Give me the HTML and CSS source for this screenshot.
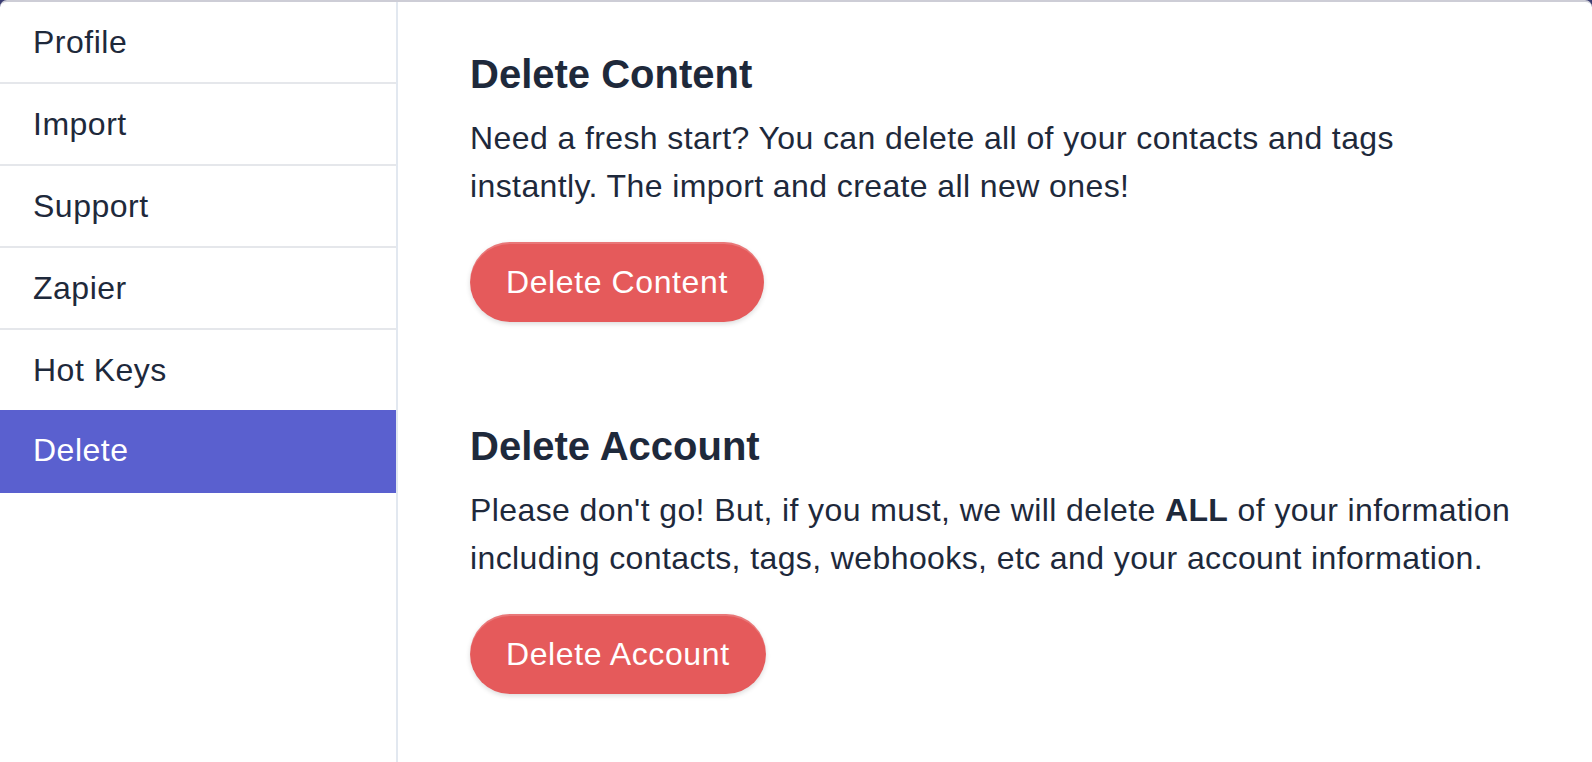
FILE: index.html
```html
<!DOCTYPE html>
<html lang="en">
<head>
<meta charset="utf-8">
<title>Settings - Delete</title>
<link rel="stylesheet" href="styles.css">
</head>
<body>
<div class="app">
  <nav class="sidebar">
    <a class="nav-item" href="#">Profile</a>
    <a class="nav-item" href="#">Import</a>
    <a class="nav-item" href="#">Support</a>
    <a class="nav-item" href="#">Zapier</a>
    <a class="nav-item" href="#">Hot Keys</a>
    <a class="nav-item active" href="#">Delete</a>
  </nav>
  <main class="main">
    <section class="section">
      <h2 class="title">Delete Content</h2>
      <p class="text">Need a fresh start? You can delete all of your contacts and tags instantly. The import and create all new ones!</p>
      <button class="btn-danger" type="button">Delete Content</button>
    </section>
    <section class="section">
      <h2 class="title">Delete Account</h2>
      <p class="text">Please don't go! But, if you must, we will delete <strong>ALL</strong> of your information including contacts, tags, webhooks, etc and your account information.</p>
      <button class="btn-danger" type="button">Delete Account</button>
    </section>
  </main>
</div>
</body>
</html>
```

FILE: styles.css
```css
html {
  background: #3a3d72;
}
body {
  margin: 0;
  font-family: "Liberation Sans", Arial, sans-serif;
  color: #1e293b;
}
.app {
  display: flex;
  min-height: 760px;
  background: #ffffff;
  border-top: 2px solid #cdcdd6;
  border-radius: 7px 7px 0 0;
}
.sidebar {
  width: 396px;
  flex: 0 0 396px;
  border-right: 2px solid #e2e8f0;
  display: flex;
  flex-direction: column;
}
.nav-item {
  display: block;
  height: 80px;
  line-height: 80px;
  padding-left: 33px;
  font-size: 32px;
  letter-spacing: 0.5px;
  color: #1e293b;
  text-decoration: none;
  border-bottom: 2px solid #e5e7eb;
}
.nav-item.active {
  background: #5a60cf;
  color: #ffffff;
  height: 83px;
  line-height: 80px;
  border-bottom: none;
  margin-top: -2px;
}
.main {
  flex: 1;
  padding: 48px 40px 0 72px;
}
.section + .section {
  margin-top: 100px;
}
.title {
  margin: 0;
  font-size: 40px;
  line-height: 48px;
  font-weight: 700;
  color: #1e293b;
}
.text {
  margin: 16px 0 32px;
  max-width: 1050px;
  font-size: 32px;
  line-height: 48px;
  letter-spacing: 0.4px;
}
.text strong {
  font-weight: 700;
}
.btn-danger {
  display: block;
  height: 80px;
  padding: 0 36px;
  border: none;
  border-radius: 40px;
  background: #e55a5b;
  color: #ffffff;
  font-family: "Liberation Sans", Arial, sans-serif;
  font-size: 32px;
  letter-spacing: 0.6px;
  line-height: 48px;
  box-shadow: inset 0 2px 0 rgba(255, 255, 255, 0.18), 0 2px 5px rgba(0, 0, 0, 0.14);
  cursor: pointer;
}
```
